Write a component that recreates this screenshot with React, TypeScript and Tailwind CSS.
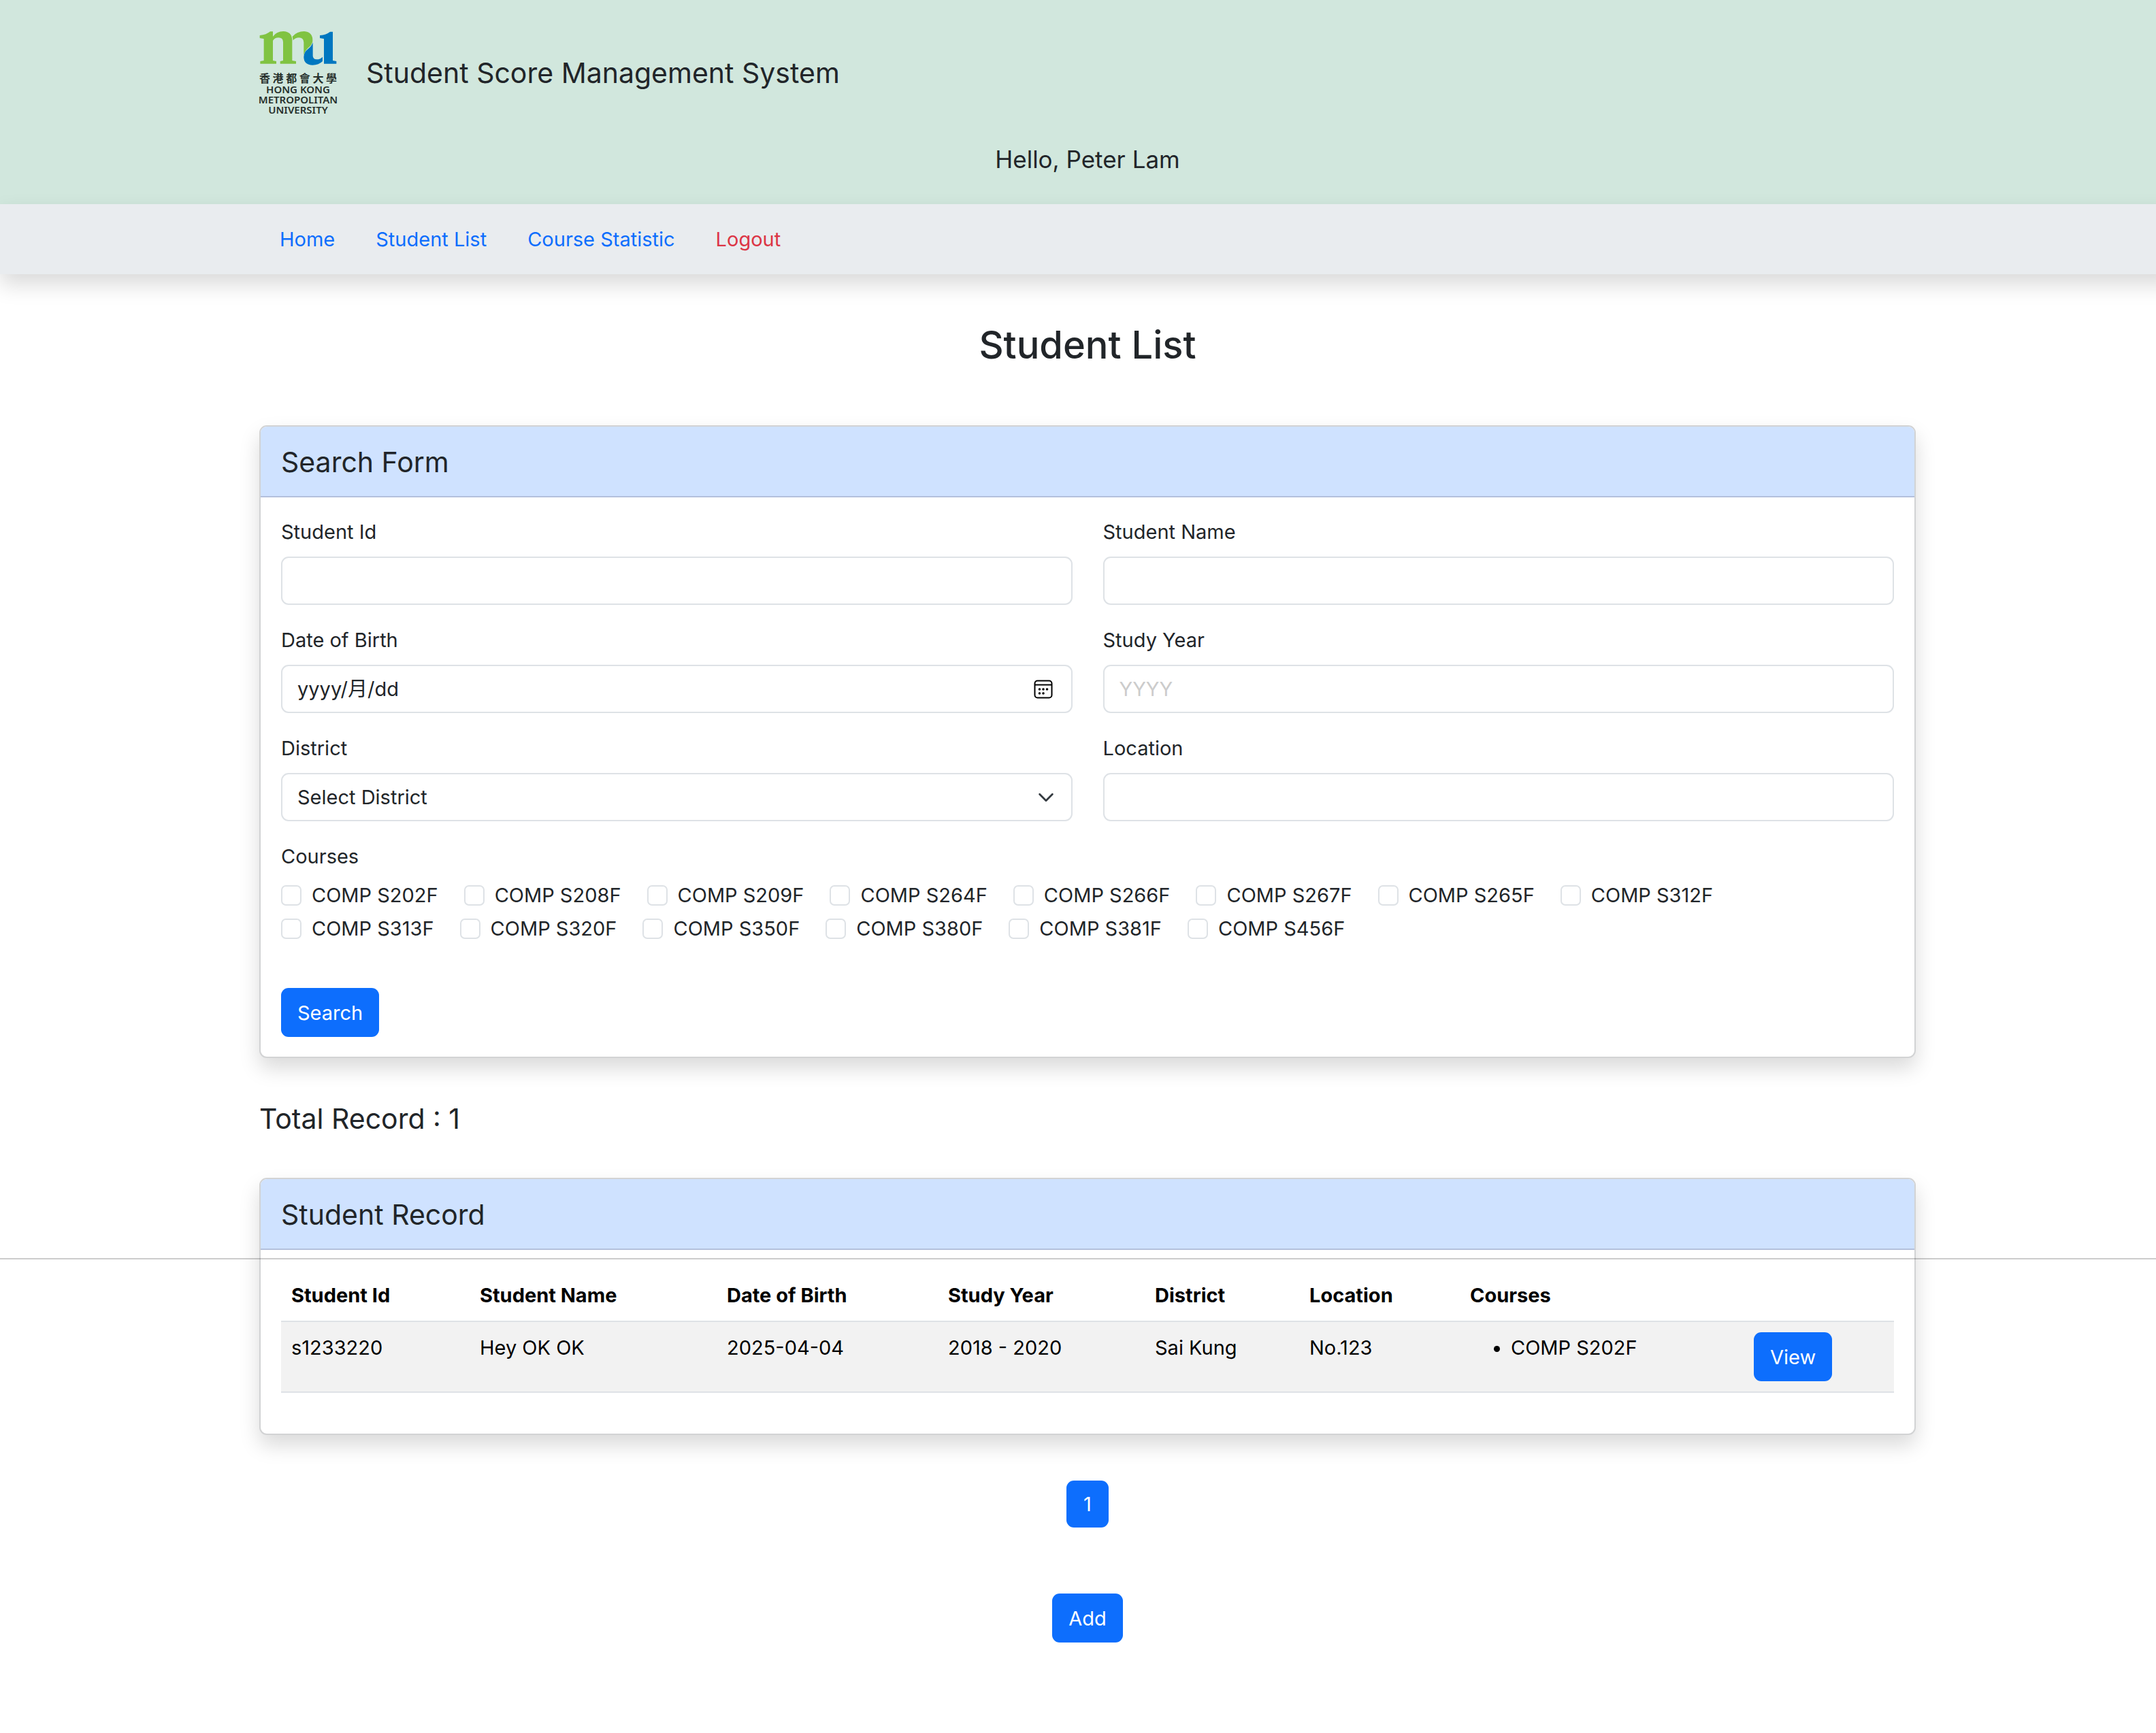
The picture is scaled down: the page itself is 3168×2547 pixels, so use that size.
import React, { useState } from "react";

const navLinks = [
  { label: "Home", tone: "text-[#0d6efd]" },
  { label: "Student List", tone: "text-[#0d6efd]" },
  { label: "Course Statistic", tone: "text-[#0d6efd]" },
  { label: "Logout", tone: "text-[#dc3545]" },
];

const courses = [
  "COMP S202F",
  "COMP S208F",
  "COMP S209F",
  "COMP S264F",
  "COMP S266F",
  "COMP S267F",
  "COMP S265F",
  "COMP S312F",
  "COMP S313F",
  "COMP S320F",
  "COMP S350F",
  "COMP S380F",
  "COMP S381F",
  "COMP S456F",
];

const columns = [
  { label: "Student Id", width: "w-[277px]" },
  { label: "Student Name", width: "w-[363px]" },
  { label: "Date of Birth", width: "w-[325px]" },
  { label: "Study Year", width: "w-[304px]" },
  { label: "District", width: "w-[227px]" },
  { label: "Location", width: "w-[236px]" },
  { label: "Courses", width: "w-[417px]" },
];

const students = [
  {
    id: "s1233220",
    name: "Hey OK OK",
    birth: "2025-04-04",
    years: "2018 - 2020",
    district: "Sai Kung",
    location: "No.123",
    courses: ["COMP S202F"],
  },
];

const fieldClass =
  "h-[71px] w-full appearance-none rounded-[11px] border-2 border-[#dee2e6] bg-white px-[22px] text-[29px] leading-[45px] text-[#212529] outline-none";

const buttonClass =
  "inline-flex h-[72px] items-center justify-center rounded-[11px] bg-[#0d6efd] px-6 text-[29px] leading-[45px] text-white";

function Logo() {
  return (
    <a href="#home" aria-label="Hong Kong Metropolitan University" className="flex w-[114px] flex-col text-[#26302c]">
      <svg viewBox="62 72 342 153" className="h-[51px] w-[114px]" aria-hidden="true">
        <path
          fill="#80c342"
          d="M64 93 Q92 91 110 76 H122 V98 Q138 75 168 75 Q205 76 207 113 V204 L224 207 V218 H154 V207 L167 204 V122 Q166 103 147 103 Q130 103 122 116 V204 L137 207 V218 H66 V207 L82 204 V108 L64 105 Z"
        />
        <path fill="#80c342" d="M208 98 Q228 75 260 75 Q299 78 297 119 Q294 135 278 148 Q264 160 258 180 V124 Q257 103 237 103 Q221 103 211 115 Z" />
        <path
          fill="#0077c0"
          d="M298 124 V184 Q299 199 315 199 Q331 199 341 188 V207 Q324 224 297 224 Q258 222 258 188 Q258 168 276 154 Q292 142 298 124 Z"
        />
        <path fill="#0077c0" d="M329 93 Q356 91 374 77 H386 V204 L402 207 V218 H347 V108 L329 105 Z" />
      </svg>
      <span lang="zh-Hant" className="mt-2 flex justify-between font-['Noto_Sans_CJK_TC',sans-serif] text-[16px] leading-[20px] font-bold">
        {["香", "港", "都", "會", "大", "學"].map((c) => (
          <span key={c}>{c}</span>
        ))}
      </span>
      <span className="flex flex-col items-center font-['Noto_Sans',sans-serif] text-[15px] leading-[15px] font-semibold">
        <span>HONG KONG</span>
        <span>METROPOLITAN</span>
        <span>UNIVERSITY</span>
      </span>
    </a>
  );
}

function CalendarIcon() {
  return (
    <svg viewBox="0 0 28 28" className="size-7" fill="none" stroke="#000" strokeWidth="2" aria-hidden="true">
      <rect x="1.5" y="1.5" width="25" height="25" rx="4" />
      <path d="M2 7.5h24" />
      <g fill="#000" stroke="none">
        <circle cx="8.5" cy="14" r="1.8" />
        <circle cx="14" cy="14" r="1.8" />
        <circle cx="19.5" cy="14" r="1.8" />
        <circle cx="8.5" cy="20" r="1.8" />
        <circle cx="14" cy="20" r="1.8" />
      </g>
    </svg>
  );
}

function Field({ id, label, children }: { id: string; label: string; children: React.ReactNode }) {
  return (
    <div className="flex flex-col gap-[14px]">
      <label htmlFor={id}>{label}</label>
      {children}
    </div>
  );
}

function Card({ title, children }: { title: string; children: React.ReactNode }) {
  return (
    <section className="rounded-[11px] border-2 border-[#d2d3d4] bg-white shadow-[0_15px_30px_rgba(0,0,0,0.15)]">
      <h2 className="rounded-t-[9px] border-b-2 border-[#b3c0dc] bg-[#cfe2ff] px-[30px] pt-[25px] pb-[23px] text-[41px] leading-[54px]">
        {title}
      </h2>
      {children}
    </section>
  );
}

function SearchForm() {
  const [checked, setChecked] = useState<string[]>([]);
  const toggle = (course: string) =>
    setChecked((list) => (list.includes(course) ? list.filter((c) => c !== course) : [...list, course]));

  return (
    <form className="px-[30px] pt-[28px] pb-[29px]" onSubmit={(e) => e.preventDefault()}>
      <div className="grid grid-cols-2 gap-x-[45px] gap-y-[29px]">
        <Field id="student-id" label="Student Id">
          <input id="student-id" type="text" className={fieldClass} />
        </Field>
        <Field id="student-name" label="Student Name">
          <input id="student-name" type="text" className={fieldClass} />
        </Field>
        <Field id="birth" label="Date of Birth">
          <div className="relative">
            <input
              id="birth"
              type="text"
              placeholder="yyyy/月/dd"
              className={`${fieldClass} placeholder:text-[#212529]`}
            />
            <button type="button" aria-label="Open calendar" className="absolute inset-y-0 right-[29px] flex items-center">
              <CalendarIcon />
            </button>
          </div>
        </Field>
        <Field id="year" label="Study Year">
          <input id="year" type="text" placeholder="YYYY" className={`${fieldClass} placeholder:text-[#cccccc]`} />
        </Field>
        <Field id="district" label="District">
          <div className="relative">
            <select id="district" className={fieldClass} defaultValue="">
              <option value="">Select District</option>
              <option value="sai-kung">Sai Kung</option>
            </select>
            <span className="pointer-events-none absolute inset-y-0 right-6 flex items-center">
              <svg viewBox="0 0 16 16" className="size-[30px]" fill="none" stroke="#343a40" strokeWidth="1.5" strokeLinecap="round" strokeLinejoin="round" aria-hidden="true">
                <path d="m3 5.5 5 5 5-5" />
              </svg>
            </span>
          </div>
        </Field>
        <Field id="location" label="Location">
          <input id="location" type="text" className={fieldClass} />
        </Field>
      </div>

      <fieldset className="mt-[29px]">
        <legend>Courses</legend>
        <div className="mt-3 flex flex-wrap gap-x-[38px] gap-y-1 pr-[200px]">
          {courses.map((course) => (
            <label key={course} className="flex items-center gap-[15px]">
              <input
                type="checkbox"
                checked={checked.includes(course)}
                onChange={() => toggle(course)}
                className="size-[30px] appearance-none rounded-[7px] border-2 border-[#dee2e6] bg-white checked:border-[#0d6efd] checked:bg-[#0d6efd]"
              />
              {course}
            </label>
          ))}
        </div>
      </fieldset>

      <button type="submit" className={`${buttonClass} mt-[65px]`}>
        Search
      </button>
    </form>
  );
}

function StudentTable() {
  return (
    <div className="px-[30px] pt-[30px] pb-[60px]">
      <table className="w-full table-fixed border-collapse text-left text-black">
        <thead>
          <tr className="border-b-2 border-[#dee2e6]">
            {columns.map((col) => (
              <th key={col.label} scope="col" className={`${col.width} px-[15px] pt-[14px] pb-[15px] font-bold`}>
                {col.label}
              </th>
            ))}
            <td />
          </tr>
        </thead>
        <tbody>
          {students.map((s) => (
            <tr key={s.id} className="border-b-2 border-[#dee2e6] bg-[#f2f2f2] align-top">
              <td className="px-[15px] py-[15px]">{s.id}</td>
              <td className="px-[15px] py-[15px]">{s.name}</td>
              <td className="px-[15px] py-[15px]">{s.birth}</td>
              <td className="px-[15px] py-[15px]">{s.years}</td>
              <td className="px-[15px] py-[15px]">{s.district}</td>
              <td className="px-[15px] py-[15px]">{s.location}</td>
              <td className="px-[15px] py-[15px]">
                <ul className="list-disc pl-[60px]">
                  {s.courses.map((c) => (
                    <li key={c}>{c}</li>
                  ))}
                </ul>
              </td>
              <td className="px-[15px] py-[15px]">
                <a href="#view" className={`${buttonClass} align-top`}>
                  View
                </a>
              </td>
            </tr>
          ))}
        </tbody>
      </table>
    </div>
  );
}

export default function App() {
  return (
    <div className="overflow-x-hidden bg-white">
      <div className="relative min-h-screen w-[calc(100%+28px)] font-['Inter','Noto_Sans_CJK_TC',sans-serif] text-[29px] leading-[45px] text-[#212529]">
        <header className="bg-[#d1e7dd] pt-[45px] pb-[43px]">
          <div className="mx-auto max-w-[2434px]">
            <div className="flex items-center gap-[43px]">
              <Logo />
              <h1 className="text-[41px] leading-[54px]">Student Score Management System</h1>
            </div>
            <p className="mt-[43px] text-center text-[35px] leading-[45px]">Hello, Peter Lam</p>
          </div>
        </header>

        <nav className="bg-[#e9ecef] shadow-[0_15px_30px_rgba(0,0,0,0.15)]">
          <ul className="mx-auto flex max-w-[2434px] gap-[60px] px-[30px] py-[29px]">
            {navLinks.map((link) => (
              <li key={link.label}>
                <a href="#nav" className={link.tone}>
                  {link.label}
                </a>
              </li>
            ))}
          </ul>
        </nav>

        <main className="mx-auto max-w-[2434px]">
          <h2 className="pt-[68px] pb-[82px] text-center text-[56px] leading-[72px] font-medium">Student List</h2>
          <Card title="Search Form">
            <SearchForm />
          </Card>
          <p className="pt-[62px] pb-[60px] text-[41px] leading-[54px]">Total Record : 1</p>
          <Card title="Student Record">
            <StudentTable />
          </Card>
          <div className="mt-[67px] flex flex-col items-center gap-[97px]">
            <button type="button" className="h-[69px] w-[62px] rounded-[11px] bg-[#0d6efd] text-white">
              1
            </button>
            <button type="button" className={buttonClass}>
              Add
            </button>
          </div>
        </main>

        <hr className="absolute inset-x-0 top-[1849px] border-0 border-t-2 border-black/20" />
      </div>
    </div>
  );
}
